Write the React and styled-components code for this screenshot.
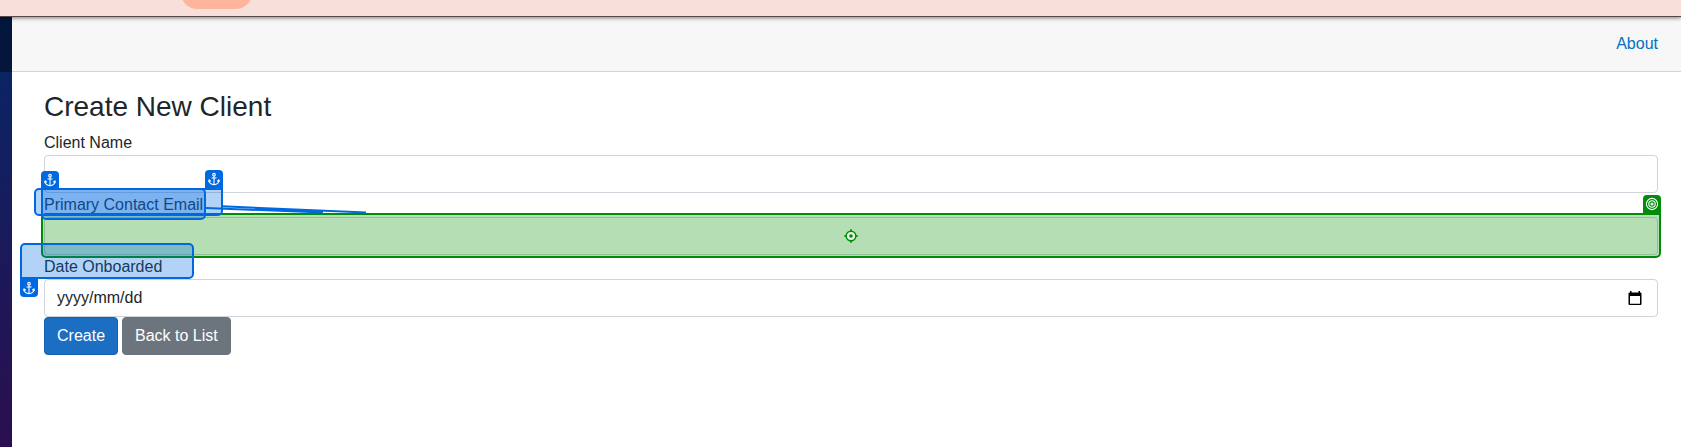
import React from "react";
import styled, { createGlobalStyle, css } from "styled-components";

const BLUE = "#0069e0";
const GREEN = "#008c0a";

const Global = createGlobalStyle`
  * { box-sizing: border-box; }
  body {
    margin: 0;
    overflow: hidden;
    background: #fff;
    color: #212529;
    font: 16px/24px "Liberation Sans", Arial, sans-serif;
  }
`;

const Page = styled.div`
  position: relative;
  height: 447px;
  overflow: hidden;
  display: flex;
  flex-direction: column;
`;

const BrowserBar = styled.div`
  position: relative;
  z-index: 1;
  flex: none;
  height: 17px;
  padding: 0 0 7px 181px;
  display: flex;
  align-items: flex-end;
  background: #f6e0d9;
  border-bottom: 1px solid #564844;
  box-shadow: 0 1px 4px rgba(0, 0, 0, 0.5);
`;

const Tab = styled.div`
  flex: none;
  width: 71px;
  height: 32px;
  background: #ffb59d;
  border-radius: 16px;
`;

const Shell = styled.div`
  flex: 1;
  display: flex;
`;

const Sidebar = styled.div`
  flex: none;
  width: 12px;
  background: linear-gradient(#052767, #3a0647 585px);
`;

const SidebarTop = styled.div`
  height: 55px;
  background: rgba(0, 0, 0, 0.4);
`;

const Main = styled.main`
  flex: 1;
`;

const TopRow = styled.header`
  height: 55px;
  padding-right: 23px;
  display: flex;
  align-items: center;
  justify-content: flex-end;
  background: #f7f7f7;
  border-bottom: 1px solid #d6d5d5;
`;

const Link = styled.a`
  color: #0071c1;
  text-decoration: none;
`;

const Content = styled.section`
  padding: 17.6px 23px 0 32px;
`;

const Title = styled.h3`
  margin: 0 0 8px;
  font-size: 28px;
  line-height: 33.6px;
  font-weight: 400;
`;

const Label = styled.label`
  display: block;
  height: 24px;
`;

const Field = styled.div`
  height: 38px;
  padding: 0 15px 0 12px;
  display: flex;
  align-items: center;
  justify-content: space-between;
  border: 1px solid #ced4da;
  border-radius: 4px;
  background: #fff;
`;

const Actions = styled.div`
  display: flex;
  gap: 4px;
`;

const Button = styled.button`
  height: 38px;
  padding: 0 12px;
  font: inherit;
  color: #fff;
  border: 1px solid ${(p) => (p.$primary ? "#1861ac" : "#6c757d")};
  border-radius: 4px;
  background: ${(p) => (p.$primary ? "#1b6ec2" : "#6c757d")};
`;

const Region = styled.div`
  position: absolute;
  left: ${(p) => p.$x}px;
  top: ${(p) => p.$y}px;
  width: ${(p) => p.$w}px;
  height: ${(p) => p.$h}px;
  border: 2px solid ${(p) => p.$color};
  border-radius: 5px;
  background: ${(p) => p.$fill};
  ${(p) => p.$square && css`border-${p.$square}-radius: 0;`}
  display: flex;
  align-items: center;
  justify-content: center;
`;

const Badge = styled.div`
  position: absolute;
  ${(p) => (p.$right ? "right: -2px;" : "left: -2px;")}
  ${(p) => (p.$below ? "top: 100%;" : "bottom: 100%;")}
  width: 18px;
  height: ${(p) => p.$h || 20}px;
  padding-top: ${(p) => (p.$below ? 3 : 1)}px;
  display: flex;
  justify-content: center;
  background: ${(p) => p.$color};
  border-radius: ${(p) => (p.$below ? "0 0 4px 4px" : "4px 4px 0 0")};
`;

const Connectors = styled.svg`
  position: absolute;
  left: 200px;
  top: 200px;
`;

const Anchor = () => (
  <svg width="16" height="16" viewBox="0 0 16 16" fill="none" stroke="#fff" strokeWidth="1.1">
    <circle cx="8" cy="3.7" r="1.3" />
    <path d="M8 5v8.800M5.500 7h5M3 9v1.200c.6 2.200 2.500 3.300 5 3.500 2.500-.2 4.400-1.300 5-3.500V9M2.500 10.800 3.100 9l1.700 1.300M13.500 10.800 12.900 9l-1.700 1.300" />
  </svg>
);

const Target = () => (
  <svg width="16" height="16" viewBox="0 0 16 16" fill="none" stroke="#fff" strokeWidth="1.1">
    <circle cx="8" cy="8" r="5.6" />
    <circle cx="8" cy="8" r="3.2" />
    <circle cx="8" cy="8" r="1" />
  </svg>
);

const Crosshair = () => (
  <svg width="16" height="16" viewBox="0 0 16 16" fill="none" stroke={GREEN}>
    <circle cx="8" cy="8" r="4.8" fill="#e4f4e4" strokeWidth="1.5" />
    <path d="M8 1.200v2.500M8 12.300v2.500M1.200 8h2.500M12.300 8h2.500" strokeWidth="1.7" />
    <circle cx="8" cy="8" r="1.8" fill={GREEN} stroke="none" />
  </svg>
);

const Calendar = () => (
  <svg width="14" height="15" viewBox="0 0 14 15">
    <path fill="#000" fillRule="evenodd" d="M2 0h1.500v1.500h7V0H12v1.500h.5q1 0 1 1V13q0 1-1 1h-11q-1 0-1-1V2.500q0-1 1-1H2zM2 5v7.700h10V5z" />
  </svg>
);

const BLUE_FILL = "rgba(0, 105, 224, 0.3)";

export default function App() {
  return (
    <Page>
      <Global />
      <BrowserBar><Tab /></BrowserBar>
      <Shell>
        <Sidebar><SidebarTop /></Sidebar>
        <Main>
          <TopRow><Link>About</Link></TopRow>
          <Content>
            <Title>Create New Client</Title>
            <Label>Client Name</Label>
            <Field />
            <Label>Primary Contact Email</Label>
            <Field />
            <Label>Date Onboarded</Label>
            <Field><span>yyyy/mm/dd</span><Calendar /></Field>
            <Actions>
              <Button $primary>Create</Button>
              <Button>Back to List</Button>
            </Actions>
          </Content>
        </Main>
      </Shell>

      <Region $x={41} $y={213} $w={1620} $h={45} $color={GREEN} $fill="rgba(0, 140, 0, 0.29)" $square="top-right">
        <Badge $right $color={GREEN}><Target /></Badge>
        <Crosshair />
      </Region>
      <Region $x={34} $y={188} $w={189} $h={28} $color={BLUE} $fill={BLUE_FILL} $square="top-right">
        <Badge $right $color={BLUE}><Anchor /></Badge>
      </Region>
      <Region $x={41} $y={188} $w={165} $h={32} $color={BLUE} $fill={BLUE_FILL} $square="top-left">
        <Badge $h={19} $color={BLUE}><Anchor /></Badge>
      </Region>
      <Region $x={20} $y={243} $w={174} $h={36} $color={BLUE} $fill={BLUE_FILL} $square="bottom-left">
        <Badge $below $color={BLUE}><Anchor /></Badge>
      </Region>
      <Connectors width="170" height="14" fill="none" stroke={BLUE} strokeWidth="2">
        <path d="M6 8 123 12.500M22 6.300 166 12.500" />
      </Connectors>
    </Page>
  );
}
